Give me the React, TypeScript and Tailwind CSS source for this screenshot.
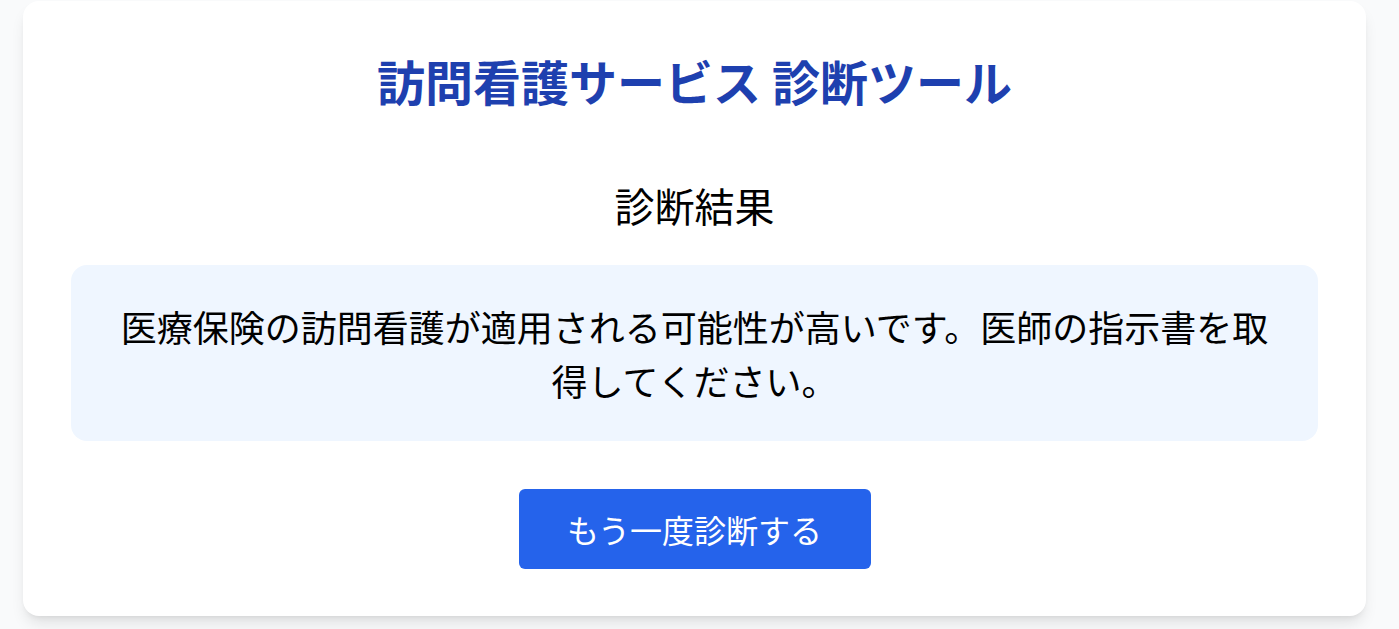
export default function App() {
  const font = {
    fontFamily: '"Noto Sans CJK JP", "Noto Sans", sans-serif',
  };
  return (
    <div className="min-h-[629px] w-full bg-[#f9fafb] pt-[1px]" style={font}>
      <div className="ml-[23px] w-[1343px] rounded-2xl bg-white px-12 pt-[55px] pb-[47px] shadow-lg">
        <h1 className="text-center text-[48px] leading-[48px] font-bold text-[#1e40af]">
          訪問看護サービス 診断ツール
        </h1>
        <h2 className="mt-[81px] text-center text-[40px] leading-[40px] text-black">
          診断結果
        </h2>
        <div className="mt-[40px] rounded-2xl bg-[#eff6ff] px-8 py-[34px] text-center text-[36px] leading-[54px] text-black">
          医療保険の訪問看護が適用される可能性が高いです。医師の指示書を取得してください。
        </div>
        <div className="mt-[48px] flex justify-center">
          <button className="h-[80px] w-[352px] rounded-md bg-[#2563eb] text-[32px] leading-[48px] text-white">
            もう一度診断する
          </button>
        </div>
      </div>
    </div>
  );
}
